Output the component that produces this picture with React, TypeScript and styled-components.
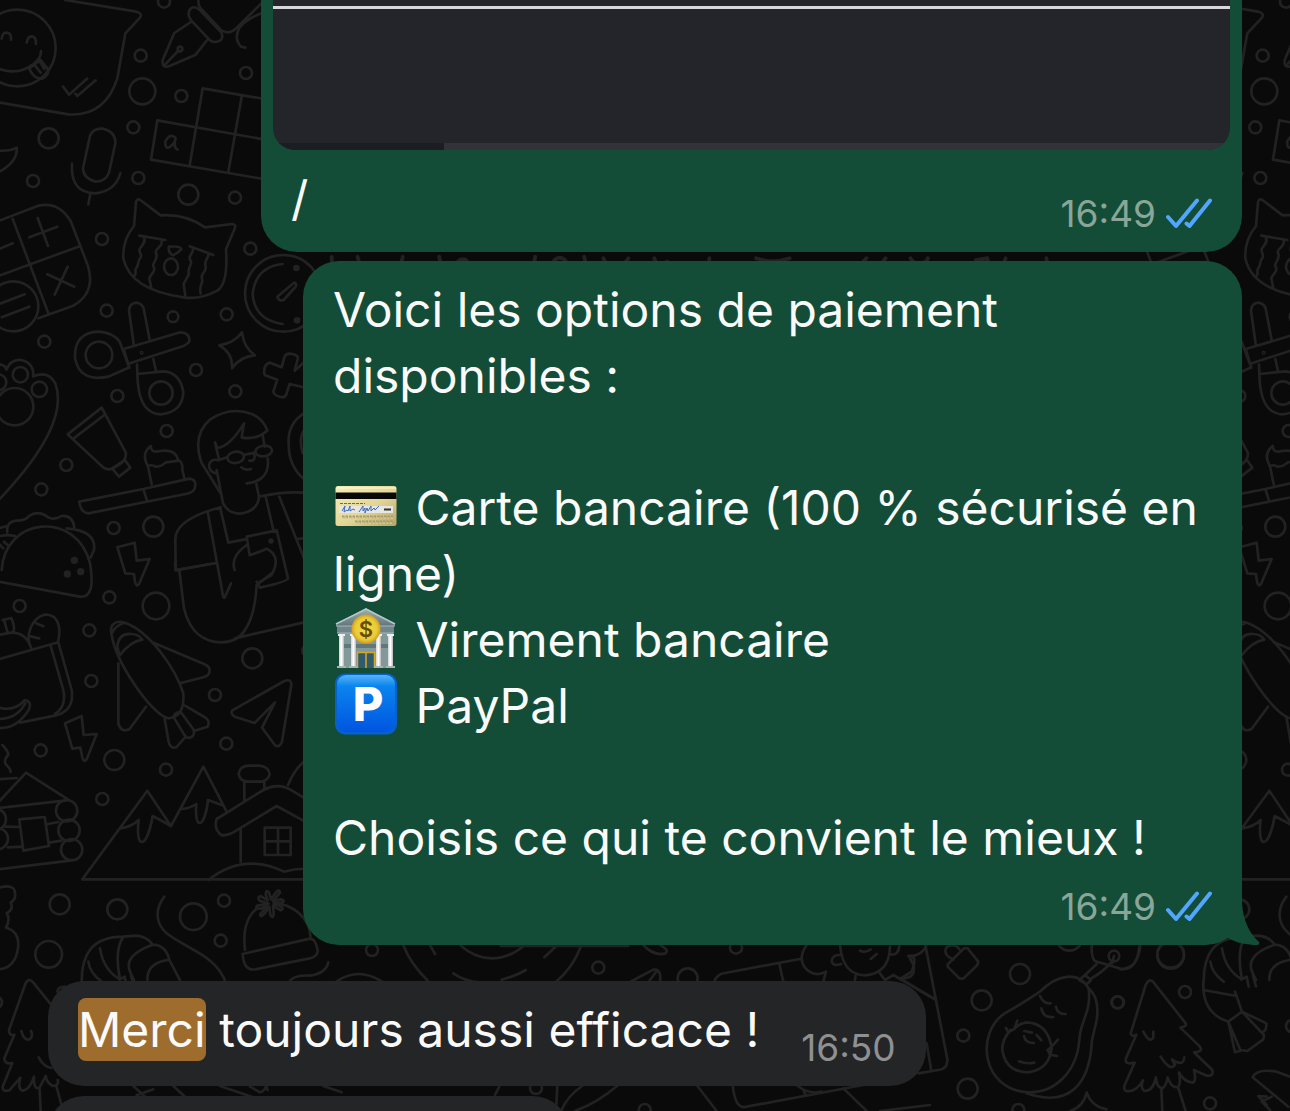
import React from "react";
import styled, { createGlobalStyle } from "styled-components";

const GlobalStyle = createGlobalStyle`
  * { box-sizing: border-box; }
  body { margin: 0; background: #0a0a0a; }
`;

const Chat = styled.main`
  position: relative;
  height: 100vh;
  overflow: hidden;
  padding: 0 48px;
  display: flex;
  flex-direction: column;
  background: #0a0a0a;
  color: #fafafa;
  font-family: Inter, "Liberation Sans", sans-serif;
  font-size: 48px;
  line-height: 66px;
`;

const Wallpaper = styled.svg`
  position: absolute;
  inset: 0;
  width: 100%;
  height: 100%;
  fill: none;
  stroke: #222222;
  stroke-width: 8;
  stroke-linecap: round;
  stroke-linejoin: round;
`;

const Bubble = styled.article<{ $own?: boolean; $flatTop?: boolean; $gap?: number }>`
  position: relative;
  flex: none;
  align-self: ${(p) => (p.$own ? "flex-end" : "flex-start")};
  max-width: ${(p) => (p.$flatTop ? "981px" : "939px")};
  margin-top: ${(p) => p.$gap ?? 0}px;
  border-radius: ${(p) => (p.$flatTop ? "0 0 36px 36px" : "36px")};
  background: ${(p) => (p.$own ? "#144d37" : "#242527")};
`;

const NextBubble = styled(Bubble)`
  width: 521px;
  height: 105px;
`;

const PhotoFrame = styled.div`
  padding: 0 12px;
`;

const Photo = styled.div`
  width: 957px;
  max-width: 100%;
  height: 150px;
  display: flex;
  flex-direction: column;
  border-radius: 0 0 22px 22px;
  overflow: hidden;
  background: #24252a;
`;

const PhotoHeader = styled.div`
  height: 9px;
  border-bottom: 3px solid #d9d7de;
`;

const PhotoFooter = styled.div`
  height: 7px;
  margin-top: auto;
  background: linear-gradient(to right, #1c1d22 171px, #323238 171px);
`;

const Body = styled.div<{ $inline?: boolean; $minHeight?: number }>`
  display: flex;
  flex-direction: ${(p) => (p.$inline ? "row" : "column")};
  align-items: flex-start;
  justify-content: space-between;
  min-height: ${(p) => p.$minHeight ?? 0}px;
  padding: 16px 30px;
  gap: ${(p) => (p.$inline ? "42px" : "14px")};
`;

const Text = styled.p`
  margin: 0;
  white-space: pre-wrap;
`;

const Meta = styled.footer<{ $own?: boolean }>`
  display: flex;
  align-items: center;
  align-self: flex-end;
  gap: 10px;
  font-size: 37px;
  line-height: 44px;
  color: ${(p) => (p.$own ? "#8aa699" : "#8f9091")};
`;

const Highlight = styled.mark`
  padding: 2px 0;
  border-radius: 8px;
  background: #9e6d2d;
  color: inherit;
`;

const Ticks = styled.svg`
  width: 46px;
  height: 32px;
  fill: none;
  stroke: #53a6fd;
  stroke-width: 4;
  stroke-linecap: round;
  stroke-linejoin: round;
`;

const Tail = styled.svg`
  position: absolute;
  right: -18px;
  bottom: 0;
  width: 54px;
  height: 54px;
  fill: #144d37;
`;

const Emoji = styled.svg`
  width: 69px;
  height: 63px;
  vertical-align: -13px;
`;

function ReadTicks() {
  return (
    <Ticks viewBox="0 0 46 32" role="img" aria-label="Lu">
      <path d="M2 19L10 28L31 2.500M20.500 25.500L23.500 28L44 2.500" />
    </Ticks>
  );
}

function CardEmoji() {
  return (
    <Emoji viewBox="-1 1 69 63" role="img" aria-label="Carte">
      <defs>
        <linearGradient id="card" x1="0" y1="0" x2="1" y2="1">
          <stop offset="0" stopColor="#f6eeb8" />
          <stop offset=".55" stopColor="#e2d696" />
          <stop offset="1" stopColor="#b5a568" />
        </linearGradient>
      </defs>
      <rect x="1.500" y="12" width="61" height="40" rx="2.500" fill="url(#card)" />
      <path d="M3 14H62" stroke="#fffbd8" strokeWidth="1" />
      <rect x="1.500" y="18.500" width="61" height="6.500" fill="#080808" />
      <path d="M6 29.500H31" stroke="#756b43" strokeWidth="1" strokeDasharray="3 1" />
      <rect x="5" y="32" width="54" height="7" fill="#e8e6e0" />
      <path d="M8 37l3-5-1 6 3-2 1 1 2-5v5l3-2 2 1M25 38l4-6v5l2-3v5l2-5 1 3 3-5v5l3-3 1 2 4-4" fill="none" stroke="#3f6bbb" strokeWidth="1" />
      <path d="M50 35.500h7" stroke="#333" strokeWidth="2" />
      <path d="M8 43H59M21 48H59" stroke="#a69b6c" strokeWidth="3" strokeDasharray="2.500 1" />
      <path d="M8 44H59M21 49H59" stroke="#eee2ab" strokeWidth="1" strokeDasharray="2 1.500" />
    </Emoji>
  );
}

function BankEmoji() {
  return (
    <Emoji viewBox="-1 1 69 63" role="img" aria-label="Banque">
      <defs>
        <linearGradient id="roof" x1="0" y1="0" x2="0" y2="1">
          <stop offset="0" stopColor="#a2b1b3" />
          <stop offset="1" stopColor="#61757a" />
        </linearGradient>
        <linearGradient id="column" x1="0" y1="0" x2="1" y2="0">
          <stop offset="0" stopColor="#d0d5d5" />
          <stop offset=".5" stopColor="#ffffff" />
          <stop offset="1" stopColor="#b9b5bb" />
        </linearGradient>
        <radialGradient id="coin">
          <stop offset="0" stopColor="#f2df42" />
          <stop offset=".75" stopColor="#e9cb36" />
          <stop offset="1" stopColor="#d49d20" />
        </radialGradient>
      </defs>
      <rect x="5" y="24" width="54" height="38" fill="#839899" />
      <path d="M5 38H59V42H5Z" fill="#61777a" />
      <path d="M2 18L32 2L61 18V20H2Z" fill="url(#roof)" />
      <path d="M2 18L32 3L61 18" fill="none" stroke="#b8c8c9" strokeWidth="1.500" />
      <rect x="3" y="20" width="57" height="7" fill="#71868b" />
      <path d="M2 20H61M3 27H60" stroke="#a7b7b9" strokeWidth="1" />
      <rect x="23" y="46" width="18" height="16" fill="#315a6c" />
      <path d="M23.500 62V46.500H40.500V62M32 46V62" fill="none" stroke="#d6a82a" strokeWidth="1.500" />
      {[5, 17, 42, 54].map((x) => (
        <g key={x}>
          <rect x={x} y="29" width="5" height="31" fill="url(#column)" />
          <rect x={x - 1} y="28" width="7" height="2" fill="#edf0f0" />
          <rect x={x - 2} y="60" width="9" height="2" fill="#a8b2b5" />
        </g>
      ))}
      <circle cx="32" cy="23" r="14.500" fill="url(#coin)" />
      <text x="32" y="31" textAnchor="middle" fontFamily="Inter, sans-serif" fontSize="22" fontWeight="600" fill="#6b4b0b">$</text>
    </Emoji>
  );
}

function ParkingEmoji() {
  return (
    <Emoji viewBox="-1 1 69 63" role="img" aria-label="P">
      <defs>
        <linearGradient id="parking" x1="0" y1="0" x2="0" y2="1">
          <stop offset="0" stopColor="#57b4f7" />
          <stop offset=".2" stopColor="#0a84ee" />
          <stop offset="1" stopColor="#0055e0" />
        </linearGradient>
      </defs>
      <rect x="1" y="1.500" width="62" height="61" rx="10" fill="#0561cd" />
      <rect x="3" y="3" width="58" height="57" rx="9" fill="url(#parking)" />
      <text x="34" y="49" textAnchor="middle" fontFamily="Inter, sans-serif" fontSize="47" fontWeight="800" fill="#ffffff">P</text>
    </Emoji>
  );
}

type Ring = [number, number, number];

const topRings: Ring[] = [
  [492, 5, 18], [422, 167, 18], [427, 274, 39], [544, 288, 18], [738, 219, 18],
  [400, 382, 18], [146, 415, 30], [99, 543, 18], [415, 534, 18], [565, 584, 30],
  [705, 593, 18], [306, 717, 18], [751, 746, 18],
];
const upperRings: Ring[] = [
  [320, 92, 18], [519, 110, 16], [680, 103, 18], [133, 185, 18], [588, 270, 18],
  [352, 348, 18], [706, 334, 18], [500, 453, 18], [199, 555, 18], [124, 628, 18],
  [341, 744, 18], [460, 740, 30], [297, 225, 40], [483, 339, 35], [61, 284, 23],
  [118, 328, 23], [-5, 307, 24],
];
const middleRings: Ring[] = [
  [59, 138, 18], [328, 112, 18], [468, 138, 40], [268, 211, 18], [274, 363, 18],
  [757, 295, 30], [645, 405, 18], [679, 551, 18], [122, 571, 18], [343, 600, 30],
  [498, 629, 18], [307, 717, 18], [200, 752, 32], [207, 811, 32], [215, 869, 32],
  [-14, 778, 32], [-8, 836, 32], [925, 272, 18],
];
const lowerRings: Ring[] = [
  [179, 193, 30], [352, 208, 30], [580, 230, 40], [672, 182, 18], [662, 302, 18],
  [146, 343, 40], [-12, 487, 18],
];
const rightRings: Ring[] = [
  [360, 342, 30], [245, 421, 30], [190, 527, 18], [203, 686, 30], [652, 427, 18],
  [855, 396, 18], [812, 286, 40], [930, 730, 18], [355, 750, 18], [642, 288, 16],
  [508, 234, 38], [1176, 498, 18],
];
const centreRings: Ring[] = [
  [355, 113, 18], [768, 53, 18], [623, 145, 30], [168, 474, 18], [494, 540, 18],
];

function Rings({ items }: { items: Ring[] }) {
  return (
    <>
      {items.map(([x, y, r]) => (
        <circle key={`${x},${y}`} cx={x} cy={y} r={r} />
      ))}
    </>
  );
}

const third = "scale(.33333)";

function Doodles() {
  return (
    <Wallpaper aria-hidden="true">
      <defs>
        <g id="tile">
          {/* speech bubble, pen, microphone, crossword, cat */}
          <g transform={third}>
            <Rings items={topRings} />
            <circle cx="52" cy="144" r="115" />
            <path d="M-20 200Q50 232 100 192Q124 175 123 153M5 116Q8 95 22 98Q34 100 33 119M80 128Q83 108 97 109Q109 112 108 132M87 205Q102 238 126 236Q150 226 142 205L122 180ZM104 195L122 218M120 185L133 207" />
            <path d="M195 0L405 34Q429 39 420 53L376 100L352 235Q315 350 205 343L-5 307M189 260L207 284L261 236M226 281L232 288L287 241" />
            <path d="M571 67L523 99L488 180Q485 205 507 199L587 164L624 117M495 194L535 152M595 0Q595 22 606 29L664 91Q690 106 711 82L784 10M567 50Q562 30 578 22Q588 20 598 29L661 94Q672 107 663 120Q646 131 631 122L574 62ZM784 40Q741 56 719 82Q700 115 723 140L736 143" />
            <circle cx="540" cy="147" r="7" />
            <path d="M270 407Q281 383 308 386Q347 395 346 430L327 518Q318 544 287 545Q250 535 249 505ZM216 491Q210 579 287 580Q347 573 361 519M271 581L265 613" />
            <path d="M608 265L810 300M608 265L569 496M472 361L790 418M453 479L790 537M472 361L453 479M725 290L685 516" />
            <path d="M527 414Q511 397 496 424Q494 447 508 442Q526 429 527 414Q519 444 533 449" />
            <path d="M402 678L408 606Q412 594 421 600L482 646Q557 641 615 682L695 672Q710 673 704 686L678 748Q685 850 652 872Q600 900 550 892Q390 870 370 775Q367 720 402 678M418 707L496 720M569 739L640 765M432 715C438 725 427 735 419 747C416 757 428 765 421 774C410 784 419 794 408 805C403 814 411 820 403 828M485 722C490 740 468 742 467 756C477 774 461 783 459 797C471 812 451 823 448 835L454 865M578 742C585 760 561 765 571 781C581 790 559 807 567 822L551 852L556 888M625 765C622 780 611 784 617 800C621 815 600 821 606 836C611 850 596 854 602 880M507 740Q543 737 544 748Q533 759 519 766Q503 758 507 740" />
            <ellipse cx="513" cy="800" rx="21" ry="25" />
            <path d="M-5 663L115 617Q177 603 213 665L264 798Q288 878 220 917L115 955M38 657L145 940M-5 828L235 740M-5 748L38 730M88 712L172 680M113 654L144 738M142 823L223 860M203 800L164 884" />
            <path d="M-5 452Q31 454 50 443Q54 485 -5 517" />
            <circle cx="850" cy="880" r="115" />
            <path d="M848 792Q767 800 758 882Q763 960 848 972M832 890L882 848Q892 850 886 861L851 900Q836 905 832 890" />
            <circle cx="889" cy="804" r="6" fill="#222222" />
            <circle cx="891" cy="961" r="6" fill="#222222" />
          </g>
          {/* scissors, paw, toothpaste, tailor, taco */}
          <g transform="translate(0 280) scale(.33333)">
            <Rings items={upperRings} />
            <circle cx="40" cy="79" r="75" />
            <path d="M0 71L74 43M5 112L88 80" />
            <path d="M401 192L387 92Q389 69 410 68Q430 72 432 91L449 180M371 207L541 157Q570 158 568 184Q565 191 553 197L385 251M385 263L325 290Q238 308 225 233Q222 157 297 155Q339 158 359 185L388 263ZM371 207L388 263M411 254L413 303Q420 401 482 403Q548 396 550 336Q540 277 490 274L413 282M460 237L468 273" />
            <circle cx="425" cy="218" r="2" />
            <path d="M726 157Q731 202 765 226Q719 230 696 265Q699 219 658 196Q703 190 726 157M920 240L884 272L894 234Q892 222 866 221Q856 223 853 232L845 262L810 248Q792 252 792 278L795 286L832 299L820 335Q822 350 850 352L858 346L869 312L920 324" />
            <circle cx="44" cy="380" r="56" />
            <path d="M-5 252Q18 255 19 269Q31 238 63 240Q102 248 100 289Q145 271 166 310Q211 435 -5 661" />
            <path d="M203 463L305 383L377 517Q382 542 350 559Q330 575 309 562ZM221 475L313 405M336 565L375 540L391 563L357 590ZM238 665L430 627L568 596Q593 598 583 628Q577 638 557 642L265 700Q241 697 238 665M430 627L440 659M455 613L444 559Q422 522 452 498Q454 521 480 513Q528 506 534 540Q549 545 547 570L553 594M443 559Q457 552 466 560Q485 560 497 547L537 542" />
            <path d="M665 645L605 549Q575 465 631 418Q693 377 757 403Q790 417 802 452Q765 482 725 472L732 430Q691 498 652 504L645 487L657 538M650 570L669 670Q685 701 720 701Q774 694 777 650L769 612M652 580Q628 580 627 555Q634 534 655 541L683 531M788 465L794 500M803 535Q811 603 740 610M724 562Q735 572 753 567M748 542Q767 545 763 525M735 524L766 518" />
            <ellipse cx="707" cy="532" rx="25" ry="17" transform="rotate(-8 707 532)" />
            <ellipse cx="791" cy="513" rx="25" ry="16" transform="rotate(-8 791 513)" />
            <path d="M662 682Q524 718 526 780L527 870L648 849M623 695L665 925Q670 963 675 950L693 910M661 685L685 788L735 778M777 650Q850 634 912 638M798 654L820 750M838 650L912 835M890 778L912 774M740 770L830 751L864 895Q864 905 780 923L770 905M740 770L749 826Q780 815 800 806Q846 830 814 886L780 905M740 795Q690 830 704 870" />
            <circle cx="813" cy="783" r="4" />
            <path d="M915 398Q861 430 866 495Q866 560 915 600M912 450Q895 475 908 520" />
            <path d="M22 758Q17 725 50 722Q77 722 87 708Q114 689 145 712Q165 722 184 708Q218 705 223 742M200 745Q290 752 282 810L272 832M-5 745L22 738M5 870C14 710 230 690 270 850Q288 955 240 950L-5 905M0 768Q25 763 45 768M-5 790L10 805M12 785L25 797" />
            <circle cx="223" cy="841" r="7" fill="#222222" />
            <circle cx="242" cy="875" r="7" fill="#222222" />
            <circle cx="202" cy="882" r="7" fill="#222222" />
            <path d="M352 802L404 788L410 842L449 837L418 910Q410 925 405 905L402 882L376 880Z" />
          </g>
          {/* rocket, bag, plane, houses, mountains */}
          <g transform="translate(0 560) scale(.33333)">
            <Rings items={middleRings} />
            <path d="M525 10L527 31L648 9M538 32L552 145C570 220 615 247 665 247Q715 245 735 210Q765 165 770 75L815 40M705 235L912 187" />
            <path d="M335 225C326 190 350 180 375 188C450 215 526 325 550 400Q555 470 505 475C455 465 348 308 335 225M335 221Q345 198 370 190M352 257Q357 219 394 222Q415 222 427 239Q390 245 358 287ZM455 246L612 312Q637 322 625 344Q620 349 610 352L540 370M355 310V490Q362 518 388 508L438 440M494 476L506 546Q512 569 530 561L555 532M555 437L618 474Q631 485 623 500L582 513M520 470Q528 451 545 460L581 509Q585 530 569 533Q561 537 552 523Z" />
            <path d="M697 451L853 363Q875 355 874 375L846 545Q839 564 825 556L786 503L825 427L764 489L704 470Q690 461 697 451" />
            <path d="M195 490L245 468L251 525L290 522L260 598Q252 610 247 592L241 563L217 566Z" />
            <path d="M-5 298L175 247L215 390Q225 460 150 470L60 488M152 258L190 390Q200 440 165 462M94 264C82 247 82 218 100 188Q130 150 163 172Q186 196 174 245M108 190L130 199M92 229L118 235M93 262Q77 217 34 218L-5 225M8 180L34 174Q48 207 38 218M12 180L22 215M-5 442Q42 457 75 420Q96 425 87 448Q50 508 -5 504M-5 477Q50 477 76 430" />
            <path d="M7 555Q22 570 25 583Q12 599 16 611Q31 625 32 636M-5 658L50 654M-5 727L78 638L205 719M-5 744L200 721M15 800L58 801M144 792L175 786M148 848L184 842M24 862L68 860M58 778L134 771L147 858L70 872ZM-5 928L210 902" />
            <path d="M247 958L442 692L513 798L610 620L678 751M362 805Q396 800 416 780C405 870 440 870 458 768Q485 782 513 798M545 747Q570 745 589 732C582 810 613 810 624 720L671 737M247 958H1500M733 724V666M793 666V690M716 641Q720 617 748 617H777Q807 620 809 643Q803 665 778 665H748Q718 665 716 641M650 777L790 690Q835 665 880 694L925 722M650 777Q640 807 665 826Q680 827 700 817L830 738L925 790M722 808V905M794 803H872V885H794ZM834 803V885M794 844H872M625 960Q730 876 852 935Q890 924 930 927M864 675Q884 625 920 598" />
          </g>
          {/* prawn, beanie */}
          <g transform="translate(0 840) scale(.33333)">
            <Rings items={lowerRings} />
            <path d="M-5 143Q45 130 45 160Q48 178 32 188Q42 207 20 220Q32 237 18 263Q60 274 54 325Q45 385 -5 388M493 170C464 208 466 250 500 280C560 328 650 345 678 430M245 425C245 350 270 290 370 290L405 287Q438 287 458 314Q498 315 508 360L550 440M265 365Q270 400 305 425M300 325Q310 390 360 418M370 290Q342 330 360 418M458 314Q370 345 390 395L402 420M503 360Q440 370 442 420M358 419L374 410L380 440M393 407L402 439" />
            <path d="M735 330C725 245 755 198 812 190C880 188 930 235 932 295M728 342L930 296Q946 295 953 330Q954 350 929 355L765 388Q731 393 728 342M865 430Q877 403 930 407Q977 400 985 367" />
            <path fill="#0a0a0a" d="M806 191L772 197Q763 206 781 206L801 198L781 223Q780 234 793 222L808 200L811 225Q820 239 821 219L819 197L842 211Q855 206 840 198L821 190L848 188Q856 180 842 178L819 183L840 158Q837 144 825 161L813 178L807 158Q798 147 797 163L803 181L781 168Q770 172 779 182Z" />
          </g>
        </g>
      </defs>
      <use href="#tile" />
      <use href="#tile" x="1122" />
      <g transform="translate(0 840) scale(.33333)">
        <path d="M158 500L100 428Q86 410 76 432L27 570Q27 589 43 584L13 655Q14 674 37 669L8 740Q7 757 28 751L61 713Q52 752 70 752Q90 748 102 710Q100 750 118 744L137 708Q140 730 160 738Q178 736 173 720M64 573Q72 605 90 597Q100 588 93 573M116 652Q130 680 155 684M119 748L122 813M168 735L186 800M172 455Q174 440 194 440M400 738L440 775M410 766L460 748M520 738L555 770M660 738L755 770M750 740L780 757Q798 752 798 735L803 750M970 738L1025 757" />
      </g>
      <g transform="translate(310 930) scale(.33333)">
        <circle cx="186" cy="60" r="18" />
        <path d="M280 45Q300 100 355 154M360 45L375 72M445 40Q490 84 545 85Q600 84 645 45M572 48H955M735 52L703 82M812 50Q790 110 740 154M430 130Q465 155 510 157M575 149Q620 137 647 120M80 154Q145 110 215 154" />
      </g>
      <g transform="translate(480 930) scale(.33333)">
        <Rings items={centreRings} />
        <path d="M490 45Q520 78 555 71Q570 60 540 45M450 156L520 119Q545 115 540 155M530 123L508 153M703 155Q710 132 735 129L960 87M898 101L910 155M980 45Q955 80 972 109Q1000 145 1038 125L1030 155M1080 45Q1088 135 1155 136Q1228 130 1230 50M1080 75Q1056 74 1055 95Q1060 110 1083 102M1233 73Q1255 77 1258 48M1140 62Q1158 70 1172 58M1172 87L1190 72M1127 135L1124 155M1200 130L1215 150L1240 135L1350 200M1265 145Q1310 145 1300 105L1287 78Q1325 80 1340 45M45 495L60 465M232 465L229 525M245 540Q260 500 310 465M285 543Q350 520 415 465M650 465L710 543M758 465Q765 540 800 530L1150 465M950 465Q985 495 1025 485M970 480L976 495M1090 475L1160 543M1200 543L1350 525" />
      </g>
      <g transform="translate(900 860) scale(.33333)">
        <Rings items={rightRings} />
        <path d="M76 255L142 598Q143 628 115 630L55 640M80 550L93 627M0 355L108 420M25 288Q55 285 35 335L0 357M140 285Q128 259 155 256Q171 255 178 268M145 290L160 299M143 313L193 264L203 265L235 305L232 315L190 356L178 355L143 320ZM576 255Q572 285 584 303L665 327Q711 331 718 260" />
        <path d="M420 395C470 345 535 330 566 385C575 460 539 485 538 540C530 640 460 700 385 697C245 690 225 520 314 460Q360 435 420 395M566 385Q600 415 590 480L576 540C570 670 510 745 380 700M538 360L555 345L573 360L560 373ZM555 345L590 312M573 356Q610 335 638 303M642 288L636 310" />
        <path d="M332 510Q305 540 307 570Q317 635 382 637Q447 630 455 565Q445 490 380 487Q355 491 343 507M318 504L325 516L343 507L352 482M373 513L396 518M372 528Q376 550 402 549M410 525L424 541M357 604Q380 613 403 608M474 539L452 563L443 570L450 584L471 588M420 408Q430 432 452 430M424 445Q430 475 460 471M468 440Q472 463 497 462" />
        <path d="M692 520L737 375Q750 350 763 370L857 490Q861 500 841 503L900 560Q911 575 882 577L937 630Q942 650 920 647L882 630Q890 665 878 668Q850 664 837 637Q843 670 835 680Q815 687 803 652Q798 683 785 685Q769 680 768 652Q758 696 732 692Q720 683 729 661Q705 700 677 692Q670 688 674 675L704 608Q672 616 678 595L709 524Q696 532 692 520M730 515Q748 550 760 533V515M782 590Q810 635 825 615L816 598Q850 622 853 592M784 686L787 753M835 684L857 753" />
        <path d="M910 390L1010 408M910 365Q905 460 985 485L1005 577L1022 572L985 485L1026 455L1092 525L1090 538L1042 573L1022 570M1026 455L1099 490Q1100 510 1090 515M1026 455L1005 395M1058 652Q1070 625 1130 635L1170 650M1058 652L1165 740M1100 710L1075 708L1100 735M1115 710L1085 725L1110 750M512 753Q550 740 560 698Q575 740 620 748" />
      </g>
      <g transform="translate(300 240) scale(.48)">
        <path d="M66 35L68 66M120 35Q125 60 140 75M214 35Q210 55 200 70M290 35Q296 55 290 70M490 35Q485 55 490 70M592 35Q598 55 592 70M632 38L645 65M684 38L665 65M738 38L745 58L765 45M853 38L850 65M900 65L925 55M950 38Q985 50 1020 38M1180 38L1155 65M1220 38L1200 65M1272 38Q1280 55 1305 45L1308 38M1408 42L1432 38L1438 65M1470 38L1460 65M1555 38L1560 70" />
        <circle cx="339" cy="52" r="12" />
        <circle cx="541" cy="52" r="15" />
      </g>
    </Wallpaper>
  );
}

export default function App() {
  return (
    <Chat>
      <GlobalStyle />
      <Doodles />
      <Bubble $own $flatTop>
        <PhotoFrame>
          <Photo>
            <PhotoHeader />
            <PhotoFooter />
          </Photo>
        </PhotoFrame>
        <Body $inline $minHeight={102}>
          <Text>/</Text>
          <Meta $own>
            <time>16:49</time>
            <ReadTicks />
          </Meta>
        </Body>
      </Bubble>
      <Bubble $own $gap={9}>
        <Body>
          <Text>
            {"Voici les options de paiement disponibles :\n\n"}
            <CardEmoji />
            {" Carte bancaire (100 % sécurisé en ligne)\n"}
            <BankEmoji />
            {" Virement bancaire\n"}
            <ParkingEmoji />
            {" PayPal\n\nChoisis ce qui te convient le mieux !"}
          </Text>
          <Meta $own>
            <time>16:49</time>
            <ReadTicks />
          </Meta>
        </Body>
        <Tail viewBox="0 0 54 54" aria-hidden="true">
          <path d="M36 0V12C37 30 44 43 53 51Q54 54 51 54C41 54 31 52 22 47L8 36Z" />
        </Tail>
      </Bubble>
      <Bubble $gap={36}>
        <Body $inline $minHeight={105}>
          <Text>
            <Highlight>Merci</Highlight> toujours aussi efficace !
          </Text>
          <Meta>
            <time>16:50</time>
          </Meta>
        </Body>
      </Bubble>
      <NextBubble $gap={10} />
    </Chat>
  );
}
